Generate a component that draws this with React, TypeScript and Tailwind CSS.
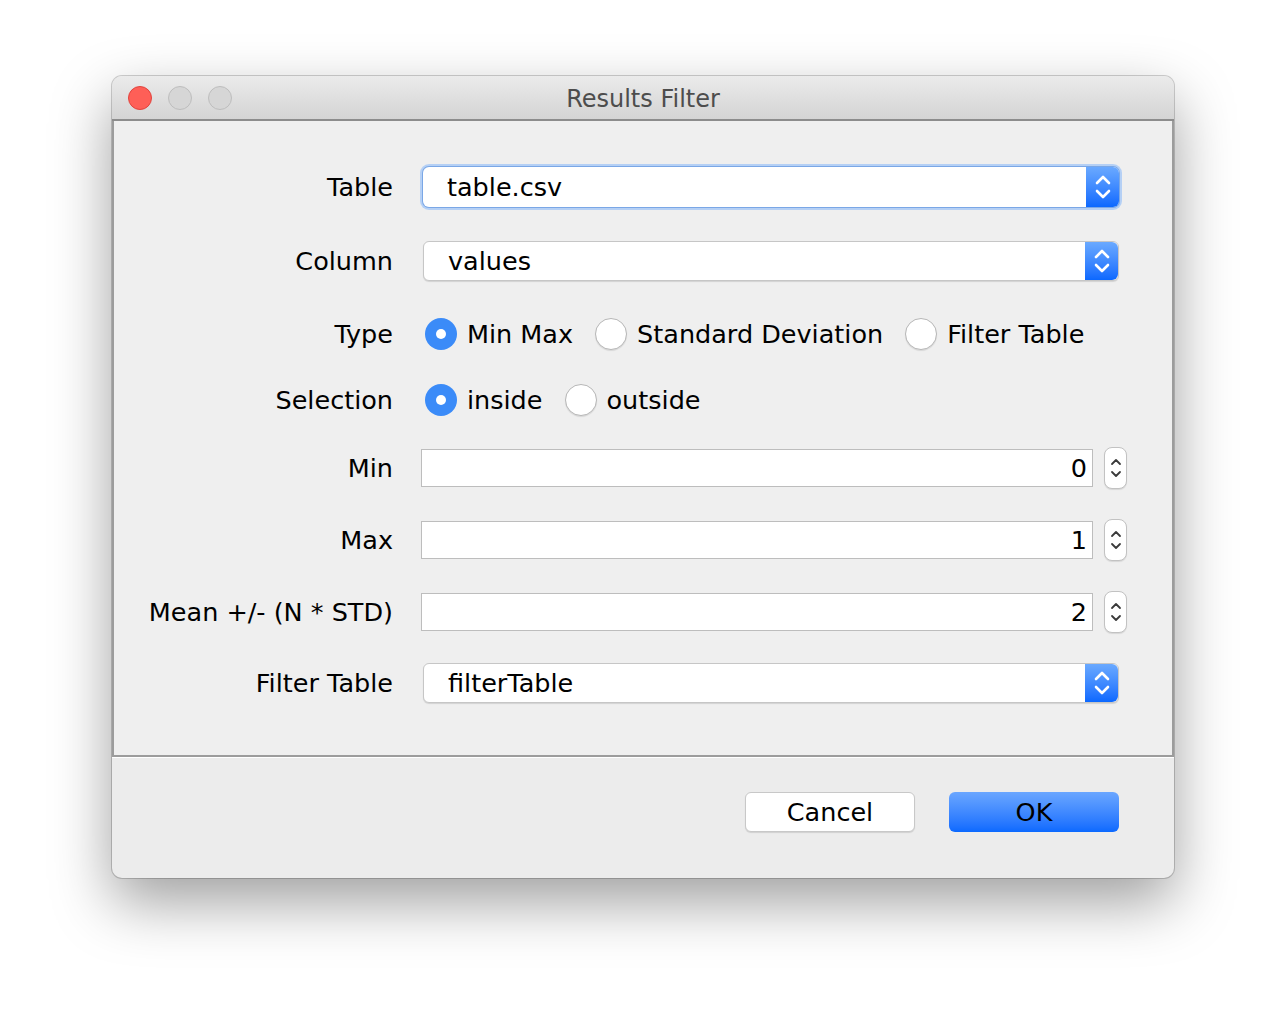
import React from "react";

const FONT = { fontFamily: '"DejaVu Sans", "Liberation Sans", sans-serif' };

function ComboChevrons() {
  return (
    <svg width="18" height="28" viewBox="0 0 18 28" fill="none">
      <path d="M3 10 L9 4 L15 10" stroke="white" strokeWidth="2.6" strokeLinecap="round" strokeLinejoin="round" />
      <path d="M3 18 L9 24 L15 18" stroke="white" strokeWidth="2.6" strokeLinecap="round" strokeLinejoin="round" />
    </svg>
  );
}

function SpinChevrons() {
  return (
    <svg width="12" height="30" viewBox="0 0 12 30" fill="none">
      <path d="M2 11 L6 7 L10 11" stroke="#3a3a3a" strokeWidth="1.8" strokeLinecap="round" strokeLinejoin="round" />
      <path d="M2 19 L6 23 L10 19" stroke="#3a3a3a" strokeWidth="1.8" strokeLinecap="round" strokeLinejoin="round" />
    </svg>
  );
}

function Combo({ value, focused }: { value: string; focused?: boolean }) {
  return (
    <div
      className={
        "ml-[2px] flex h-[40px] w-[696px] items-stretch rounded-[6px] bg-white " +
        (focused
          ? "shadow-[0_0_0_1px_#7aa7e6,0_0_0_3px_#b5d0f5]"
          : "border border-[#c6c6c6] shadow-[0_1px_1px_rgba(0,0,0,0.12)]")
      }
    >
      <div className="flex flex-1 items-center pl-[24px] text-[25.5px] text-black">{value}</div>
      <div className="flex w-[33px] items-center justify-center rounded-r-[6px] bg-gradient-to-b from-[#6aa9ff] to-[#0a68ff]">
        <ComboChevrons />
      </div>
    </div>
  );
}

function Radio({ checked, label }: { checked?: boolean; label: string }) {
  return (
    <div className="flex items-center gap-[10px]">
      {checked ? (
        <div className="flex h-[32px] w-[32px] items-center justify-center rounded-full bg-[#3b8bf8]">
          <div className="h-[10px] w-[10px] rounded-full bg-white" />
        </div>
      ) : (
        <div className="h-[32px] w-[32px] rounded-full border border-[#b7b7b7] bg-white shadow-[0_1px_1px_rgba(0,0,0,0.1)]" />
      )}
      <span className="text-[25.5px] text-black">{label}</span>
    </div>
  );
}

function Spinner({ value }: { value: string }) {
  return (
    <div className="flex items-center gap-[11px]">
      <div className="flex h-[38px] w-[672px] items-center justify-end border border-[#bdbdbd] bg-white pr-[5px] text-[25.5px] text-black">
        {value}
      </div>
      <div className="flex h-[42px] w-[23px] items-center justify-center rounded-[8px] border border-[#c2c2c2] bg-white shadow-[0_1px_1px_rgba(0,0,0,0.1)]">
        <SpinChevrons />
      </div>
    </div>
  );
}

function Row({ label, children, className }: { label: string; children: React.ReactNode; className: string }) {
  return (
    <div className={"flex h-[40px] items-center " + className}>
      <div className="w-[279px] text-right text-[25.5px] text-black">{label}</div>
      <div className="ml-[28px]">{children}</div>
    </div>
  );
}

export default function App() {
  return (
    <div className="h-[1026px] w-full bg-white pl-[112px] pt-[76px]" style={FONT}>
      <div className="flex h-[802px] w-[1062px] flex-col overflow-hidden rounded-[10px] bg-[#ececec] shadow-[0_0_0_1px_rgba(0,0,0,0.18),0_24px_60px_rgba(0,0,0,0.38)]">
        {/* title bar */}
        <div className="relative flex h-[45px] items-center justify-center border-b-2 border-[#8c8c8c] bg-gradient-to-b from-[#ebebeb] to-[#d4d4d4] pt-[3px]">
          <div className="absolute left-[16px] top-[10px] flex gap-[16px]">
            <div className="h-[24px] w-[24px] rounded-full border border-[#e0443e] bg-[#fe5f57]" />
            <div className="h-[24px] w-[24px] rounded-full border border-[#bdbdbd] bg-[#d6d6d6]" />
            <div className="h-[24px] w-[24px] rounded-full border border-[#bdbdbd] bg-[#d6d6d6]" />
          </div>
          <span className="text-[24px] text-[#4d4d4d]">Results Filter</span>
        </div>

        {/* form panel */}
        <div className="flex h-[636px] flex-col border-x-2 border-b-2 border-[#9c9c9c] bg-[#efefef] pt-[46px]">
          <Row label="Table" className="">
            <Combo value="table.csv" focused />
          </Row>
          <Row label="Column" className="mt-[34px]">
            <Combo value="values" />
          </Row>
          <Row label="Type" className="mt-[33px]">
            <div className="ml-[4px] flex items-center gap-[22px]">
              <Radio checked label="Min Max" />
              <Radio label="Standard Deviation" />
              <Radio label="Filter Table" />
            </div>
          </Row>
          <Row label="Selection" className="mt-[26px]">
            <div className="ml-[4px] flex items-center gap-[22px]">
              <Radio checked label="inside" />
              <Radio label="outside" />
            </div>
          </Row>
          <Row label="Min" className="mt-[28px]">
            <Spinner value="0" />
          </Row>
          <Row label="Max" className="mt-[32px]">
            <Spinner value="1" />
          </Row>
          <Row label="Mean +/- (N * STD)" className="mt-[32px]">
            <Spinner value="2" />
          </Row>
          <Row label="Filter Table" className="mt-[31px]">
            <Combo value="filterTable" />
          </Row>
        </div>

        {/* buttons */}
        <div className="flex flex-1 items-start justify-end gap-[34px] border-t border-white pr-[55px] pt-[34px]">
          <button className="flex h-[40px] w-[170px] items-center justify-center rounded-[6px] border border-[#c8c8c8] bg-white text-[25.5px] text-black shadow-[0_1px_1px_rgba(0,0,0,0.12)]">
            Cancel
          </button>
          <button className="flex h-[40px] w-[170px] items-center justify-center rounded-[6px] bg-gradient-to-b from-[#6aa6ff] to-[#0a69ff] text-[25.5px] text-black">
            OK
          </button>
        </div>
      </div>
    </div>
  );
}
